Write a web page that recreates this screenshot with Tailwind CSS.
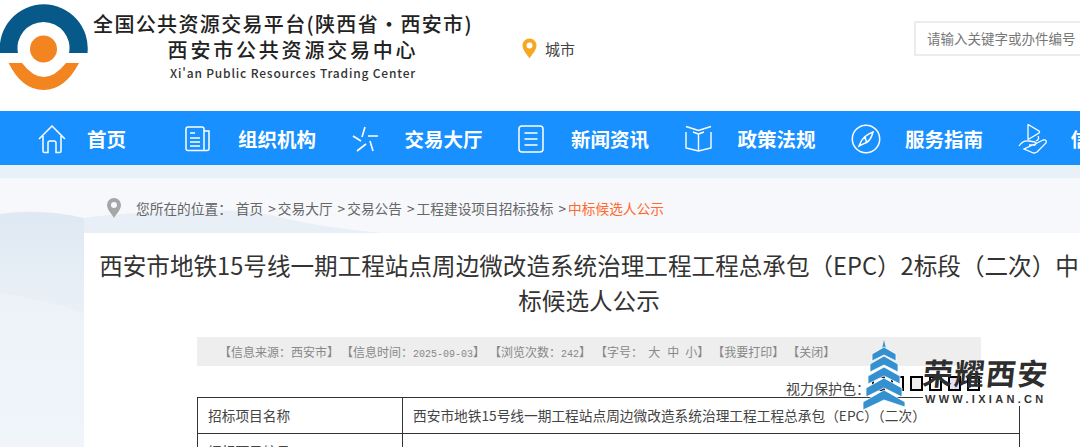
<!DOCTYPE html>
<html lang="zh-CN">
<head>
    <meta charset="UTF-8">
    <title>中标候选人公示</title>
    <script src="https://cdn.jsdelivr.net/npm/@tailwindcss/browser@4"></script>
</head>
<body class="relative h-[447px] w-[1080px] overflow-hidden bg-white font-['Noto_Sans_CJK_SC','Noto_Sans',sans-serif]">
    <!-- header -->
    <header class="flex h-[111px] items-start overflow-hidden">
        <svg class="h-[92px] w-[88px] shrink-0" viewBox="0 0 88 92">
            <path d="M0 53 A44 44 0 1 1 87.500 53 L69 53 A26 26 0 1 0 18 53 Z" fill="#07598a"/>
            <circle cx="43.500" cy="49" r="13.500" fill="#f28520"/>
            <path d="M8.600 63 H22 Q43.500 91 66 63 H79 Q65 90 43.500 90 Q22 90 8.600 63 Z" fill="#f28520"/>
        </svg>
        <div class="ml-[4px] mt-[10px] w-[382px] shrink-0 text-center text-[#222]">
            <div class="whitespace-nowrap text-[20px] font-medium leading-[27px] tracking-[1.35px]">全国公共资源交易平台(陕西省·西安市)</div>
            <div class="whitespace-nowrap pl-[20px] text-[20px] font-medium leading-[25px] tracking-[2.8px]">西安市公共资源交易中心</div>
            <div class="mt-[1px] whitespace-nowrap pl-[20px] text-[12px] font-medium leading-[19px] tracking-[0.82px] text-[#333]">Xi'an Public Resources Trading Center</div>
        </div>
        <div class="ml-[48px] mt-[38px] flex shrink-0 items-center">
            <svg class="h-[21px] w-[15px]" viewBox="0 0 15 21">
                <path fill-rule="evenodd" d="M7.500 0.500 A7 7 0 0 1 14.500 7.500 C14.500 12 9.500 17 7.500 20.500 C5.500 17 0.500 12 0.500 7.500 A7 7 0 0 1 7.500 0.500 Z M7.500 4.500 A3 3 0 1 0 7.500 10.500 A3 3 0 1 0 7.500 4.500 Z" fill="#f7a823"/>
            </svg>
            <span class="ml-[8px] text-[15px] leading-[20px] text-[#444]">城市</span>
        </div>
        <div class="ml-[339px] mt-[21px] flex h-[35px] w-[240px] shrink-0 items-center border-2 border-[#ececec] pl-[11px] text-[13.500px] text-[#777]">
            <span class="whitespace-nowrap">请输入关键字或办件编号</span>
        </div>
    </header>

    <!-- nav -->
    <nav class="flex h-[54px] items-center overflow-hidden whitespace-nowrap bg-[#1890ff] pl-[38px] pt-[1px] text-[19.500px] font-bold text-white">
        <div class="flex w-[147px] shrink-0 items-center">
            <svg class="mr-[21px] h-[30px] w-[28px] shrink-0" viewBox="0 0 28 30" fill="none" stroke="white" stroke-width="1.500">
                <path d="M1 15 L14 2 L27 15"/>
                <path d="M5 12 V27 Q5 28.500 6.500 28.500 H10 V19 Q10 17 12 17 H16 Q18 17 18 19 V28.500 H21.500 Q23 28.500 23 27 V12"/>
            </svg>
            <span>首页</span>
        </div>
        <div class="flex w-[166.500px] shrink-0 items-center">
            <svg class="mr-[28px] h-[26px] w-[25px] shrink-0" viewBox="0 0 25 26" fill="none" stroke="white" stroke-width="1.500">
                <path d="M19 24.500 H3 Q1 24.500 1 22.500 V3 Q1 1 3 1 H17 Q19 1 19 3 V24.500 H22 Q24 24.500 24 22.500 V5 H19"/>
                <path d="M5 7 H10 M5 12 H15 M5 16 H15 M5 20 H15"/>
            </svg>
            <span>组织机构</span>
        </div>
        <div class="flex w-[166.500px] shrink-0 items-center">
            <svg class="mr-[26px] h-[26px] w-[27px] shrink-0" viewBox="0 0 27 26" fill="none" stroke="white" stroke-width="1.600">
                <path d="M13 1 L10 11 M16 10 H26 M1 10 L9 15 M5 25 L14 18 M18 15 L21 25"/>
            </svg>
            <span>交易大厅</span>
        </div>
        <div class="flex w-[166.500px] shrink-0 items-center">
            <svg class="mr-[27px] h-[28px] w-[26px] shrink-0" viewBox="0 0 26 28" fill="none" stroke="white" stroke-width="1.500">
                <rect x="1" y="1" width="24" height="26" rx="3"/>
                <path d="M6.500 8 H19.500 M6.500 14 H19.500 M6.500 20 H19.500"/>
            </svg>
            <span>新闻资讯</span>
        </div>
        <div class="flex w-[166.500px] shrink-0 items-center">
            <svg class="mr-[26px] h-[27px] w-[27px] shrink-0" viewBox="0 0 27 27" fill="none" stroke="white" stroke-width="1.400">
                <path d="M1 1.500 L13.500 5.500 L26 1.500 M1 7 V23 L13.500 26 L26 23 V7"/>
                <path d="M8 7 L13.500 9 V26 M19 7 L13.500 9"/>
            </svg>
            <span>政策法规</span>
        </div>
        <div class="flex w-[166.500px] shrink-0 items-center">
            <svg class="mr-[24px] h-[30px] w-[30px] shrink-0" viewBox="0 0 30 30" fill="none" stroke="white" stroke-width="1.500">
                <circle cx="15" cy="15" r="13.700"/>
                <path d="M22 8 Q20 16 15.500 18.500 Q12 20 8 22 Q10 16 14 12.500 Q18 9.500 22 8 Z M14 12.500 L15.500 18.500"/>
            </svg>
            <span>服务指南</span>
        </div>
        <div class="flex shrink-0 items-center">
            <svg class="mr-[23px] h-[30px] w-[30px] shrink-0" viewBox="0 0 30 30" fill="none" stroke="white" stroke-width="1.300">
                <path d="M10 1 Q10 0 11 1 L21 7 Q22 8 21 9 L11 15 Q10 15.500 10 15 Z"/>
                <path d="M1 22 Q5 16 11 17 L17 18 Q19 19 17 21 L11 21 M17 20 L25 16 Q29 15 28 19 L19 28 Q16 30 13 28 L6 25 Z"/>
                <path d="M20 12 Q22 15 18 17"/>
            </svg>
            <span>信息公开</span>
        </div>
    </nav>

    <!-- page background -->
    <div class="h-[13px] bg-[#e8f0f8]"></div>
    <main class="relative h-[269px] bg-[#f7f8fb]">
        <svg class="absolute left-0 top-0 h-[269px] w-[84px]" viewBox="0 0 84 269" preserveAspectRatio="none">
            <defs>
                <linearGradient id="hill" x1="0" y1="0" x2="0" y2="1">
                    <stop offset="0" stop-color="#dfe9f3"/>
                    <stop offset="1" stop-color="#f7f8fb"/>
                </linearGradient>
            </defs>
            <path d="M0 36 Q40 30 84 40 V269 H0 Z" fill="url(#hill)"/>
            <path d="M0 115 Q40 120 84 135 V269 H0 Z" fill="#eef3f9" opacity="0.700"/>
        </svg>
        <svg class="absolute left-[84px] top-0 h-[55px] w-[700px]" viewBox="0 0 700 55" preserveAspectRatio="none">
            <path d="M0 40 Q30 35 110 33 Q160 30 200 40 Q240 50 300 55 H0 Z" fill="#e3ecf5" opacity="0.800"/>
        </svg>

        <div class="relative flex h-[55px] items-start whitespace-nowrap pl-[107px] pt-[20px] text-[13.700px] leading-[20px] text-[#666]">
            <svg class="mr-[15px] h-[20px] w-[14px] shrink-0" viewBox="0 0 14 20">
                <path fill-rule="evenodd" d="M7 0 A7 7 0 0 1 14 7 C14 12 9 16 7 20 C5 16 0 12 0 7 A7 7 0 0 1 7 0 Z M7 4 A3 3 0 1 0 7 10 A3 3 0 1 0 7 4 Z" fill="#a6a6a6"/>
            </svg>
            <span>您所在的位置：</span>
            <span class="ml-[4px]">首页</span>
            <span class="ml-[5px] mr-[2px]">&gt;</span><span>交易大厅</span>
            <span class="ml-[5px] mr-[2px]">&gt;</span><span>交易公告</span>
            <span class="ml-[5px] mr-[2px]">&gt;</span><span>工程建设项目招标投标</span>
            <span class="ml-[5px] mr-[2px]">&gt;</span><span class="text-[#ff6a2b]">中标候选人公示</span>
        </div>

        <!-- article card -->
        <article class="ml-[84px] w-[1010px] bg-white pt-[15px]">
            <h1 class="px-[14px] text-center text-[23.600px] font-normal leading-[35px] text-[#333]">西安市地铁15号线一期工程站点周边微改造系统治理工程工程总承包（EPC）2标段（二次）中标候选人公示</h1>
            <div class="ml-[113px] mt-[19px] flex h-[29px] w-[784px] items-center whitespace-nowrap bg-[#eeeeee] pl-[22px] pt-[1px] text-[12px] text-[#888]">
                <span>【信息来源：西安市】</span>
                <span class="ml-[2px]">【信息时间：<span class="font-['Liberation_Mono'] text-[10px]">2025-09-03</span>】</span>
                <span class="ml-[4px]">【浏览次数：<span class="font-['Liberation_Mono'] text-[10px]">242</span>】</span>
                <span class="ml-[4px]">【字号：<span class="ml-[5px]">大</span><span class="ml-[7px]">中</span><span class="ml-[6px]">小</span>】</span>
                <span class="ml-[3px]">【我要打印】</span>
                <span class="ml-[3px]">【关闭】</span>
            </div>
            <div class="ml-[113px] flex h-[31px] w-[784px] items-start justify-end">
                <span class="mr-[2px] mt-[13px] whitespace-nowrap text-[14px] leading-[18px] text-[#444]">视力保护色：</span>
                <div class="mr-[1px] flex gap-[6px] pt-[10px]">
                    <i class="block h-[15px] w-[13px] border-2 border-black bg-[#fdfdfd]"></i>
                    <i class="block h-[15px] w-[13px] border-2 border-black bg-[#fdfdfd]"></i>
                    <i class="block h-[15px] w-[13px] border-2 border-black bg-[#eeeeee]"></i>
                    <i class="block h-[15px] w-[13px] border-2 border-black bg-[#fffcef]"></i>
                    <i class="block h-[15px] w-[13px] border-2 border-black bg-[#e7ddf5]"></i>
                    <i class="block h-[15px] w-[13px] border-2 border-black bg-[#ffffff]"></i>
                </div>
            </div>
            <table class="ml-[113px] w-[823px] table-fixed border-collapse text-[13.700px] text-[#444]">
                <tbody>
                    <tr class="h-[36px]">
                        <td class="w-[205px] border border-[#333] pl-[10px]">招标项目名称</td>
                        <td class="border border-[#333] pl-[10px]">西安市地铁15号线一期工程站点周边微改造系统治理工程工程总承包（EPC）（二次）</td>
                    </tr>
                    <tr class="h-[35px]">
                        <td class="border border-[#333] pl-[10px]">招标项目编号</td>
                        <td class="border border-[#333]"></td>
                    </tr>
                </tbody>
            </table>
        </article>
    </main>

    <!-- watermark -->
    <div class="absolute left-[863px] top-[340px] flex items-start">
        <svg class="h-[70px] w-[42px] shrink-0" viewBox="0 0 42 70">
            <path d="M21 0 L23 9 L19 9 Z" fill="#3590cf"/>
            <path d="M9 14 L21 7 L33 14 L33 21 L21 15 L9 21 Z M7 24 L21 16 L35 24 L35 32 L21 25 L7 32 Z M5 36 L21 27 L37 36 L37 44 L21 36 L5 44 Z M3 48 L21 38 L39 48 L39 57 L21 48 L3 57 Z M0 62 L21 50 L42 62 L42 67 L21 60 L0 70 Z" fill="#3590cf" stroke="#ffffff" stroke-width="0.800"/>
        </svg>
        <div class="ml-[18px] mt-[15px] w-[125px] whitespace-nowrap text-[#2e2e2e]">
            <div class="-skew-x-6 text-[30px] font-bold leading-[35px] tracking-[1.500px]">荣耀西安</div>
            <div class="mt-[3px] bg-white pl-[2px] font-['Liberation_Sans'] text-[11px] font-bold leading-[13px] tracking-[3.300px] text-[#333]">WWW.IXIAN.CN</div>
        </div>
    </div>
</body>
</html>
